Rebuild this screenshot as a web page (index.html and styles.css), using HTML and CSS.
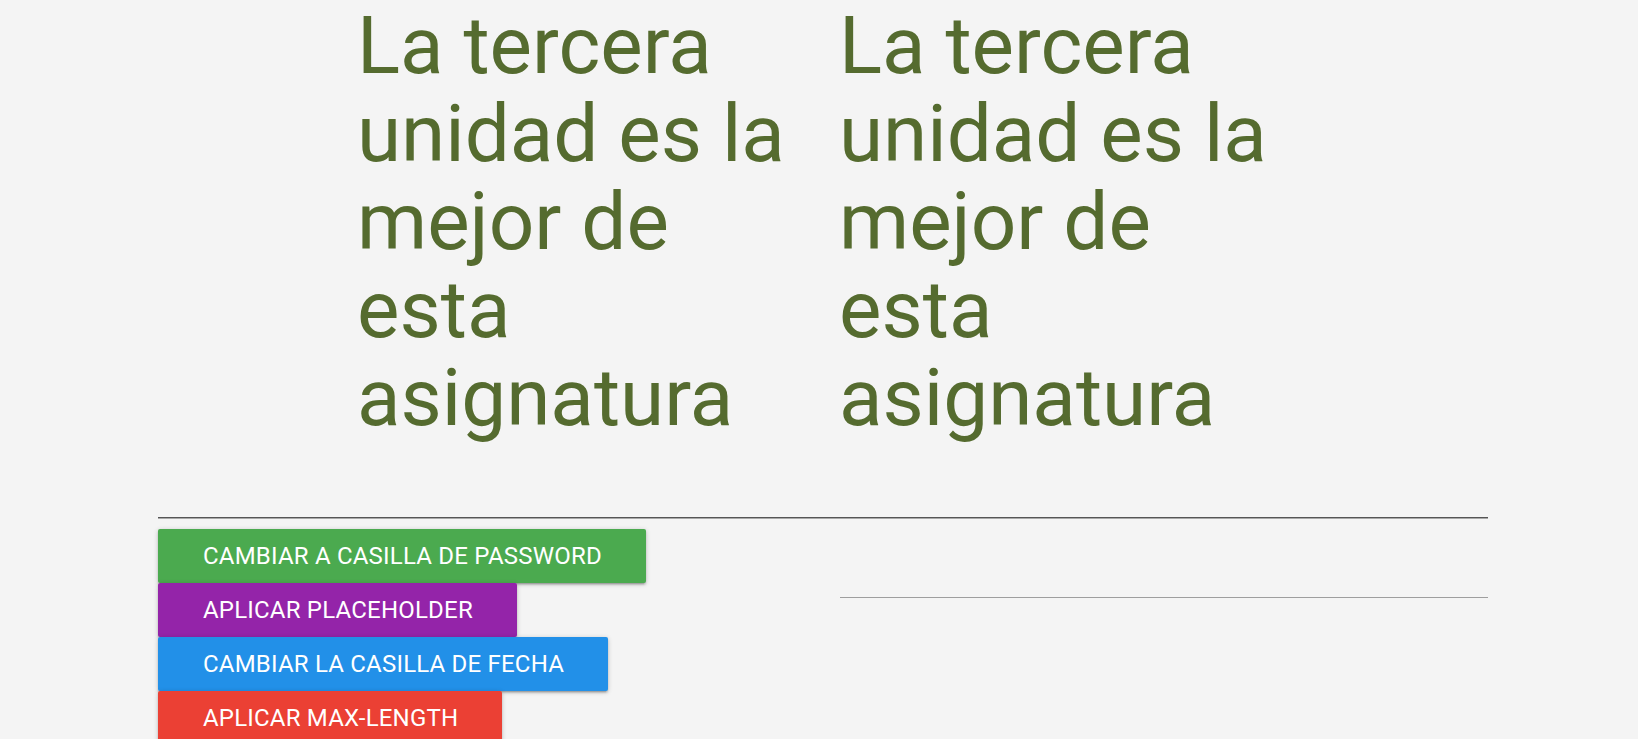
FILE: index.html
```html
<!DOCTYPE html>
<html lang="es">
<head>
<meta charset="utf-8">
<title>Unidad 3</title>
<link rel="stylesheet" href="styles.css">
</head>
<body>
<main class="page">
  <section class="headings">
    <h1 class="heading">La tercera unidad es la mejor de esta asignatura</h1>
    <h1 class="heading">La tercera unidad es la mejor de esta asignatura</h1>
  </section>
  <hr class="divider">
  <section class="controls">
    <div class="buttons">
      <button class="btn btn-green">Cambiar a casilla de password</button>
      <button class="btn btn-purple">Aplicar placeholder</button>
      <button class="btn btn-blue">Cambiar la casilla de fecha</button>
      <button class="btn btn-red">Aplicar max-length</button>
    </div>
    <div class="field">
      <input class="field-input" type="text">
    </div>
  </section>
</main>
</body>
</html>
```

FILE: styles.css
```css
html, body {
  margin: 0;
  padding: 0;
  background: #f4f4f4;
  font-family: Roboto, "Liberation Sans", sans-serif;
  overflow: hidden;
}

.page {
  width: 1330px;
  margin-left: 158px;
}

.headings {
  display: flex;
  gap: 23px;
  padding-left: 199px;
  padding-top: 2px;
}

.heading {
  width: 459px;
  margin: 0;
  font-size: 80px;
  line-height: 88px;
  font-weight: 400;
  color: #556b2f;
}

.divider {
  margin: 75px 0 0;
  height: 0;
  border: none;
  border-top: 1px solid #555555;
  border-bottom: 1px solid #a8a8a8;
}

.controls {
  display: flex;
  align-items: flex-start;
  margin-top: 10px;
}

.buttons {
  display: flex;
  flex-direction: column;
  align-items: flex-start;
}

.btn {
  height: 54px;
  line-height: 54px;
  padding: 0 44px 0 45px;
  border: none;
  border-radius: 2px;
  font-family: Roboto, "Liberation Sans", sans-serif;
  font-size: 24px;
  font-weight: 400;
  letter-spacing: 0.2px;
  text-transform: uppercase;
  color: #ffffff;
  box-shadow: 0 2px 2px 0 rgba(0,0,0,.14), 0 3px 1px -2px rgba(0,0,0,.12), 0 1px 5px 0 rgba(0,0,0,.2);
  cursor: pointer;
}

.btn-green { background: #4baa4f; }
.btn-purple { background: #9424a9; }
.btn-blue { background: #2290e8; }
.btn-red { background: #eb4034; }

.field {
  margin-left: auto;
  width: 648px;
  padding-top: 23px;
}

.field-input {
  display: block;
  width: 100%;
  height: 45px;
  padding: 0;
  border: none;
  border-bottom: 1px solid #9e9e9e;
  background: transparent;
  outline: none;
  font-size: 16px;
}
```
